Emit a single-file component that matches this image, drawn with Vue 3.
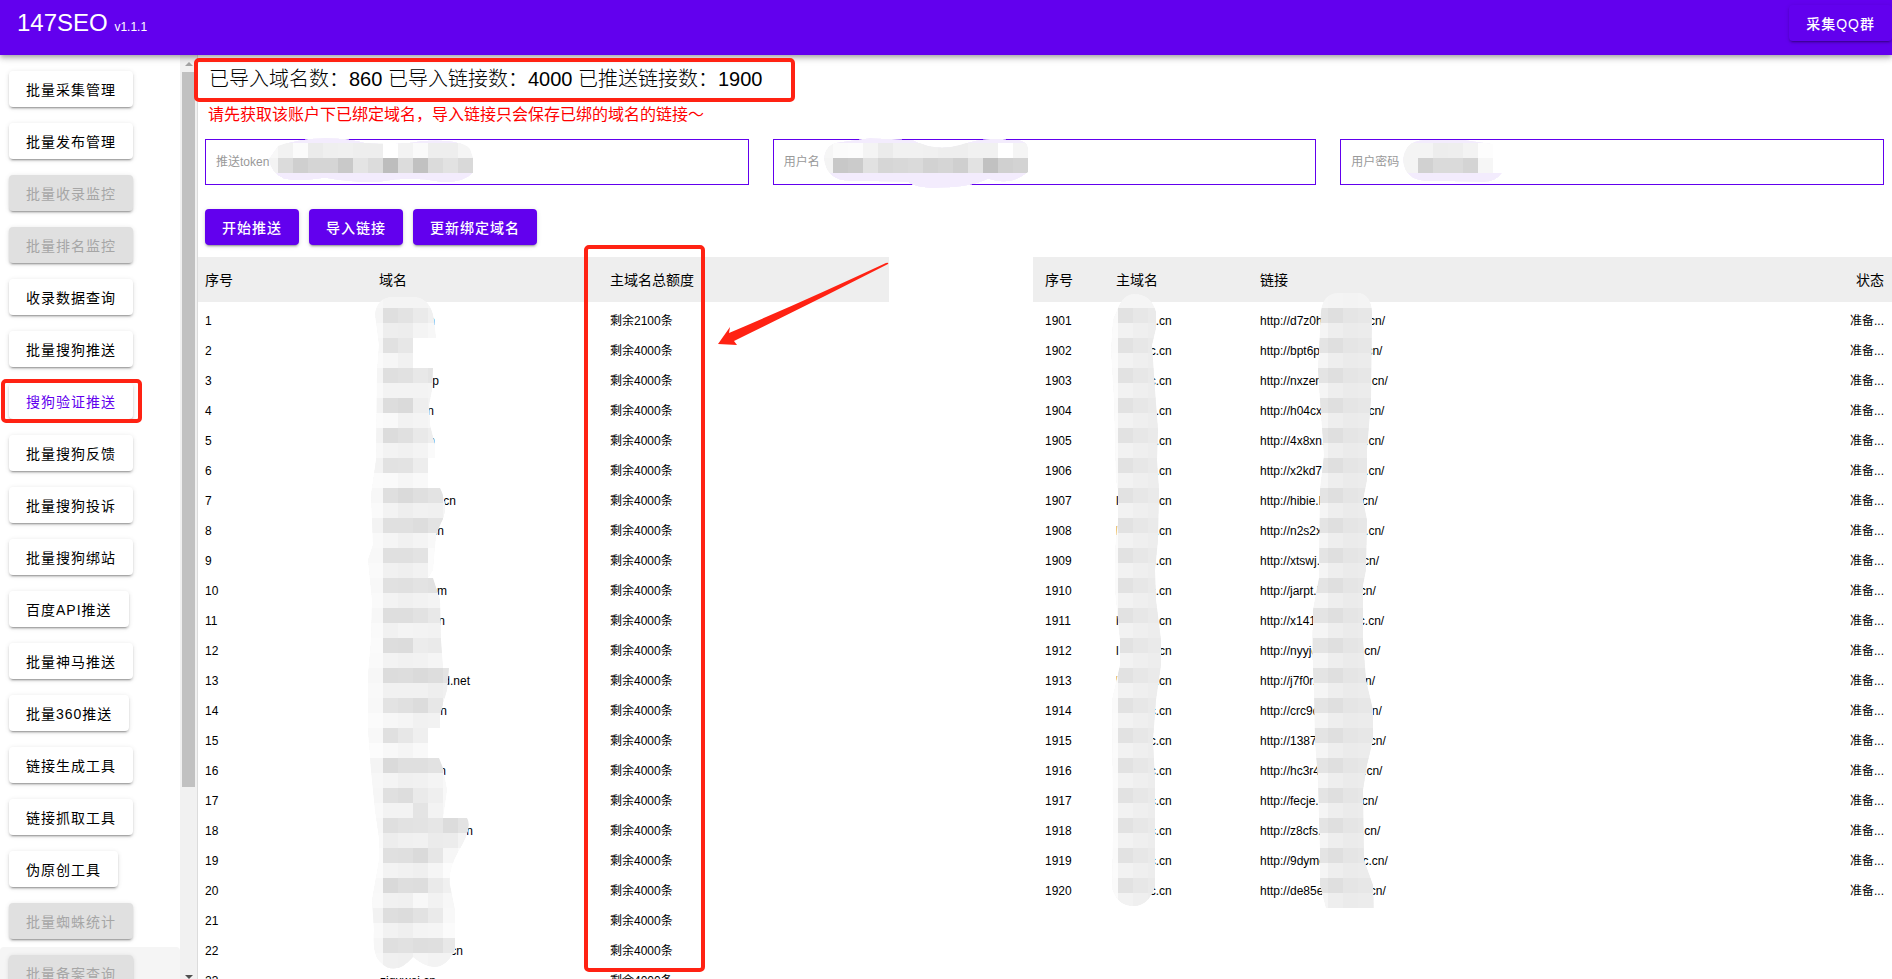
<template>
  <div class="app">
    <header class="top-bar">
      <h1 class="brand">147SEO <small>v1.1.1</small></h1>
      <button type="button" class="btn btn-primary">采集QQ群</button>
    </header>

    <div class="body">
      <nav class="sidebar">
        <ul class="menu">
          <li
            v-for="item in menus"
            :key="item.name"
            class="menu-item"
            :class="{ hover: item.hover }"
          >
            <button
              type="button"
              class="btn"
              :class="{ active: item.active }"
              :disabled="item.disabled"
            >{{ item.name }}</button>
          </li>
        </ul>
      </nav>
      <div class="scrollbar" aria-hidden="true">
        <svg class="arrow" viewBox="0 0 8 4"><path d="M0 4L4 0L8 4Z" fill="#a3a3a3" /></svg>
        <div class="thumb"></div>
        <svg class="arrow" viewBox="0 0 8 4"><path d="M0 0L4 4L8 0Z" fill="#505050" /></svg>
      </div>

      <main class="content">
        <h2 class="stats">已导入域名数：860 已导入链接数：4000 已推送链接数：1900</h2>
        <p class="tip">请先获取该账户下已绑定域名，导入链接只会保存已绑的域名的链接～</p>

        <div class="fields">
          <label v-for="f in fields" :key="f.label" class="field">
            <span>{{ f.label }}</span>
            <input v-model="f.value" :type="f.type" />
          </label>
        </div>

        <div class="actions">
          <button v-for="a in actions" :key="a" type="button" class="btn btn-primary">{{ a }}</button>
        </div>

        <div class="tables">
          <table class="list domains">
            <thead>
              <tr>
                <th class="col-no">序号</th>
                <th class="col-domain">域名</th>
                <th>主域名总额度</th>
              </tr>
            </thead>
            <tbody>
              <tr v-for="(d, i) in domains" :key="i">
                <td>{{ i + 1 }}</td>
                <td><span class="domain" :style="{ width: d.width + 'px' }">{{ d.text }}</span></td>
                <td>剩余{{ d.quota }}条</td>
              </tr>
            </tbody>
          </table>

          <table class="list links">
            <thead>
              <tr>
                <th class="col-no">序号</th>
                <th class="col-domain">主域名</th>
                <th>链接</th>
                <th class="col-state">状态</th>
              </tr>
            </thead>
            <tbody>
              <tr v-for="(sub, i) in subs" :key="sub">
                <td>{{ 1901 + i }}</td>
                <td>l<i class="masked"></i>c.cn</td>
                <td>http://{{ sub }}.l<i class="masked"></i>c.cn/</td>
                <td class="col-state">准备...</td>
              </tr>
            </tbody>
          </table>
        </div>
      </main>
    </div>

    <!-- 打码和标注层 -->
    <svg class="marks" width="100%" height="100%" aria-hidden="true">
      <defs>
        <clipPath v-for="m in mosaics" :id="m.id" :key="m.id">
          <path :d="m.outline" />
        </clipPath>
      </defs>
      <g
        v-for="m in mosaics"
        :key="m.id"
        :clip-path="`url(#${m.id})`"
        shape-rendering="crispEdges"
      >
        <path :d="m.outline" :fill="m.base" />
        <rect
          v-for="(c, i) in m.cells"
          :key="i"
          :x="c.x"
          :y="c.y"
          width="15"
          height="15"
          :fill="c.fill"
        />
      </g>
      <g fill="none" stroke="#ff2213" stroke-width="4">
        <rect x="196" y="60" width="597" height="40" rx="3" />
        <rect x="3" y="381" width="137" height="40" rx="3" />
        <rect x="586" y="247" width="117" height="723" rx="3" />
      </g>
      <path
        d="M718 344L730 327L729 333Q800 303 886 263Q889 262 888 264Q810 304 734 341L737 345Z"
        fill="#ff2213"
      />
    </svg>
  </div>
</template>

<script setup>
import { ref } from "vue"

const menus = [
  { name: "批量采集管理" },
  { name: "批量发布管理" },
  { name: "批量收录监控", disabled: true },
  { name: "批量排名监控", disabled: true },
  { name: "收录数据查询" },
  { name: "批量搜狗推送" },
  { name: "搜狗验证推送", active: true },
  { name: "批量搜狗反馈" },
  { name: "批量搜狗投诉" },
  { name: "批量搜狗绑站" },
  { name: "百度API推送" },
  { name: "批量神马推送" },
  { name: "批量360推送" },
  { name: "链接生成工具" },
  { name: "链接抓取工具" },
  { name: "伪原创工具" },
  { name: "批量蜘蛛统计", disabled: true },
  { name: "批量备案查询", disabled: true, hover: true }
]

const fields = ref([
  { label: "推送token", type: "text", value: "" },
  { label: "用户名", type: "text", value: "" },
  { label: "用户密码", type: "password", value: "" }
])

const actions = ["开始推送", "导入链接", "更新绑定域名"]

// 域名前半段已打码，只保留后缀，width 是整段域名的宽度
const domains = [
  ["n", 56], ["", 40], ["p", 60], ["n", 55], ["n", 56], ["", 40],
  ["cn", 77], [".cn", 65], ["", 40], ["om", 68], ["n", 66], ["", 40],
  ["d.net", 91], ["n", 68], ["", 40], ["n", 67], ["", 40], ["n", 94],
  ["", 40], ["", 40], ["", 40], ["cn", 84], ["ziguwei.cn", 57]
].map(([text, width], i) => ({ text, width, quota: i === 0 ? 2100 : 4000 }))

const subs = [
  "d7z0h", "bpt6p", "nxzem", "h04cx", "4x8xn", "x2kd7", "hibie", "n2s2x", "xtswj", "jarpt",
  "x1411", "nyyjo", "j7f0r", "crc9d", "13870", "hc3r4", "fecje", "z8cfs", "9dymc", "de85e"
]

// 每两位十六进制是一格的灰度
const makeCells = (x, y, rows) =>
  rows.flatMap((row, r) =>
    row.split(" ").map((g, c) => ({
      x: x + c * 15,
      y: y + r * 15,
      fill: `#${g}${g}${g}`
    }))
  )

const domainRows = [
  "f7 f4 f4 f4 f5",
  "f5 df e3 ea f0", "f9 ee ed f4 f7", "f7 e1 e7 fb fb", "fa f6 f1 fd fd",
  "f5 df e1 e8 e4", "f9 f3 f3 f3 f4", "f3 dd da ee f2", "fb f9 f2 f4 f6",
  "f3 dc e0 e9 ee", "f8 f3 f1 f4 fa", "f3 e2 e3 ed fa", "fb fa f6 f9 fb",
  "f7 df da df e3", "fa f3 ee f1 f0", "f3 e0 e0 dd e3", "f9 f5 f1 f4 f8",
  "f8 e0 e0 e3 fb", "fa f1 ef f2 fb", "f8 e1 e0 e3 e1", "fa f3 f0 f2 f4",
  "f7 de de e2 e8", "fa f1 f4 f3 f2", "fb dd dc ec ea", "fa f3 f1 f2 f5",
  "f7 dc dd da dd e3", "f9 f1 f1 f1 ee f0", "f8 e3 e0 dc e7", "fb f7 f5 f1 f2",
  "f8 e0 e7 ef fd", "fc f8 f5 f9 fd", "f4 da df df e2 f6", "f7 f4 f0 f1 f4 f8",
  "f6 e0 dd ea ef f8", "f9 f3 f3 e4 f3 f8", "f7 df e2 e3 e6 dc e3", "f9 ed f0 f1 eb ec f3",
  "fb e0 df da e6 f6 fa", "fb f3 f1 ef f5 fc fc", "f8 d9 de dd ea f0", "f9 f1 f0 f8 f2 f7",
  "f2 de dc e2 ea f8", "f9 f2 ef f4 f5 fb", "f6 df e1 de df e8", "f8 f0 ef f5 f3 f3"
]

const repeatRows = (dark, light, first) => {
  const rows = [first]
  for (let i = 0; i < 20; i++) {
    rows.push(dark, light)
  }
  return rows
}

const mosaics = [
  {
    id: "mask-domain",
    base: "#f5f5f5",
    outline:
      "M375 314Q377 298 392 297L415 297Q431 299 434 320L436 338L413 338L413 368L433 368L432 390L429 405L430 425L435 445L435 458L428 458L428 488L440 488Q450 508 441 523L436 535L433 570L428 578L433 578L440 600L441 640L443 668L449 668L447 690L440 715L440 728L428 728L428 758L439 758L443 768L447 790L443 818L467 818Q473 828 458 852Q448 870 450 885L455 910L455 950Q440 980 413 957Q395 978 380 962Q372 955 374 930L372 900L379 860L379 838L375 810L371 770L368 730L368 675L371 640L372 600L368 560L373 545L371 495L376 460L377 370L379 345Z",
    cells: makeCells(368, 293, domainRows)
  },
  {
    id: "mask-main",
    base: "#f3f3f3",
    outline:
      "M1118 308Q1124 294 1134 294Q1151 294 1156 312L1156 328L1152 345L1155 390L1158 430L1157 460L1159 490L1158 540L1155 570L1156 600L1161 640L1161 665L1156 700L1153 740L1155 780L1155 887Q1148 906 1134 906Q1117 906 1112 888L1113 830L1112 700L1120 665L1120 640L1115 590L1115 550L1118 520L1118 490L1116 480L1114 400L1111 350L1113 320Z",
    cells: makeCells(1103, 293, repeatRows("fa e2 e7 ea ea", "fb f2 ef ed ee", "f6 f5 f5 f5 f5"))
  },
  {
    id: "mask-link",
    base: "#f3f3f3",
    outline:
      "M1321 312Q1323 293 1339 293L1360 293Q1371 296 1372 312L1371 400L1367 450L1367 480L1363 500L1367 520L1366 570L1363 585L1363 640L1366 680L1373 710L1373 740L1367 765L1363 790L1364 860L1373 885L1374 908L1326 908L1320 885L1320 850L1318 780L1315 740L1314 690L1312 650L1313 610L1319 578L1320 490L1324 455L1320 400L1318 370Z",
    cells: makeCells(1313, 293, repeatRows("e4 df e5 e7 ef", "f5 ee eb ec f1", "f5 f4 f3 f4 f5"))
  },
  {
    id: "mask-token",
    base: "#f3ecfd",
    outline:
      "M269 159L278 146Q300 138 325 138Q350 138 366 143Q400 145 420 141Q460 138 470 149L473 158L473 173Q462 184 440 182Q410 176 380 182Q350 183 325 178Q300 182 284 179Q271 173 269 159Z",
    cells: makeCells(263, 143, [
      "f8 f2 fb eb ef f0 ee ee ff f3 fa ee ee f5",
      "f3 db cf d5 d5 c9 e4 dc bd dc c1 db e2 d9"
    ])
  },
  {
    id: "mask-user",
    base: "#f3ecfd",
    outline:
      "M824 159Q825 144 840 142L870 138L913 140Q935 152 960 145Q985 136 1010 140Q1028 138 1028 150L1028 172Q1012 187 988 179Q970 188 935 188Q915 188 908 182L850 181Q827 181 824 159Z",
    cells: makeCells(818, 143, [
      "f6 fb fc f4 eb f1 f1 f0 ee ee f1 f1 ff f5",
      "f4 c8 cb e1 d6 d8 da d2 d5 cf e2 c1 d0 d3"
    ])
  },
  {
    id: "mask-password",
    base: "#f3ecfd",
    outline:
      "M1403 160Q1405 141 1423 140L1465 140L1493 144L1493 173L1502 173Q1496 182 1484 182L1425 181Q1405 180 1403 160Z",
    cells: makeCells(1403, 143, ["f4 f4 ed ee f3 fd", "f4 d1 da da d4 f6"])
  }
]
</script>

<style>
body {
  margin: 0;
}
</style>

<style scoped>
.app {
  position: relative;
  display: flex;
  flex-direction: column;
  height: 100vh;
  overflow: hidden;
  background: #fff;
  color: #000;
  font-family: "Liberation Sans", "Noto Sans CJK SC", sans-serif;
}

.top-bar {
  position: relative;
  z-index: 1;
  display: flex;
  flex: none;
  align-items: center;
  justify-content: space-between;
  box-sizing: border-box;
  height: 55px;
  padding: 0 0 10px 17px;
  background: #6200ee;
  color: #fff;
  box-shadow: 0 2px 4px -1px rgba(0, 0, 0, 0.2), 0 4px 5px 0 rgba(0, 0, 0, 0.14),
    0 1px 10px 0 rgba(0, 0, 0, 0.12);
}

.brand {
  margin: 0;
  font-size: 24px;
  font-weight: 400;
}

.brand small {
  font-size: 12px;
}

.btn {
  height: 36px;
  padding: 0 17px;
  border: 0;
  border-radius: 4px;
  background: #fff;
  color: #000;
  font-family: inherit;
  font-size: 14px;
  letter-spacing: 1px;
  white-space: nowrap;
  box-shadow: 0 3px 1px -2px rgba(0, 0, 0, 0.2), 0 2px 2px 0 rgba(0, 0, 0, 0.14),
    0 1px 5px 0 rgba(0, 0, 0, 0.12);
}

.btn.active {
  color: #6200ee;
}

.btn:disabled {
  background: #e0e0e0;
  color: #a6a6a6;
}

.btn-primary {
  background: #6200ee;
  color: #fff;
  font-weight: 500;
}

.body {
  display: flex;
  flex: 1;
  min-height: 0;
}

.sidebar {
  flex: none;
  width: 180px;
  overflow: hidden;
}

.menu {
  margin: 0;
  padding: 8px 0;
  list-style: none;
}

.menu-item {
  display: flex;
  align-items: center;
  height: 52px;
  padding-left: 9px;
}

.menu-item.hover {
  border-radius: 4px;
  background: #f5f5f5;
}

.scrollbar {
  display: flex;
  flex: none;
  flex-direction: column;
  align-items: center;
  box-sizing: border-box;
  width: 18px;
  padding-top: 7px;
  border-right: 1px solid #dcdcdc;
  background: #f1f1f1;
}

.scrollbar .arrow {
  flex: none;
  width: 8px;
  height: 4px;
}

.scrollbar .arrow:last-child {
  margin-top: auto;
}

.thumb {
  flex: none;
  width: 13px;
  height: 78%;
  margin-top: 6px;
  background: #c1c1c1;
}

.content {
  flex: 1;
  min-width: 0;
  overflow: hidden;
}

.stats {
  margin: 8px 11px;
  font-size: 20px;
  font-weight: 300;
  line-height: 32px;
}

.tip {
  margin: 0 10px 12px;
  color: #f00;
  font-size: 16px;
  line-height: 24px;
}

.fields {
  display: flex;
  gap: 24px;
  padding: 0 8px 0 7px;
}

.field {
  display: flex;
  flex: 1;
  align-items: center;
  gap: 10px;
  box-sizing: border-box;
  min-width: 0;
  height: 46px;
  padding: 0 10px;
  border: 1px solid #6200ee;
  color: #999;
  font-size: 12px;
  line-height: 16px;
}

.field input {
  flex: 1;
  min-width: 0;
  border: 0;
  outline: 0;
  background: transparent;
  font-size: 14px;
}

.actions {
  display: flex;
  gap: 10px;
  padding: 24px 7px 12px;
}

.tables {
  display: grid;
  grid-template-columns: 691fr 859fr;
  align-items: start;
  gap: 144px;
}

.list {
  width: 100%;
  border-spacing: 0;
  table-layout: fixed;
  font-size: 12px;
  line-height: 16px;
}

.list th {
  height: 45px;
  padding: 0 0 0 7px;
  background: #eee;
  font-size: 14px;
  font-weight: 400;
  text-align: left;
}

.list td {
  height: 30px;
  padding: 0 0 0 7px;
  overflow: hidden;
  white-space: nowrap;
}

.list tbody::before {
  display: block;
  height: 4px;
  content: "";
}

.domains .col-no {
  width: 167px;
}

.domains .col-domain {
  width: 224px;
}

.domain {
  display: inline-block;
  text-align: right;
}

.links th,
.links td {
  padding-left: 12px;
}

.links .col-no {
  width: 59px;
}

.links .col-domain {
  width: 132px;
}

.links .col-state {
  width: 60px;
  padding-right: 8px;
  text-align: right;
}

.masked {
  display: inline-block;
  width: 31px;
}

.marks {
  position: absolute;
  top: 0;
  left: 0;
  z-index: 2;
  pointer-events: none;
}
</style>
